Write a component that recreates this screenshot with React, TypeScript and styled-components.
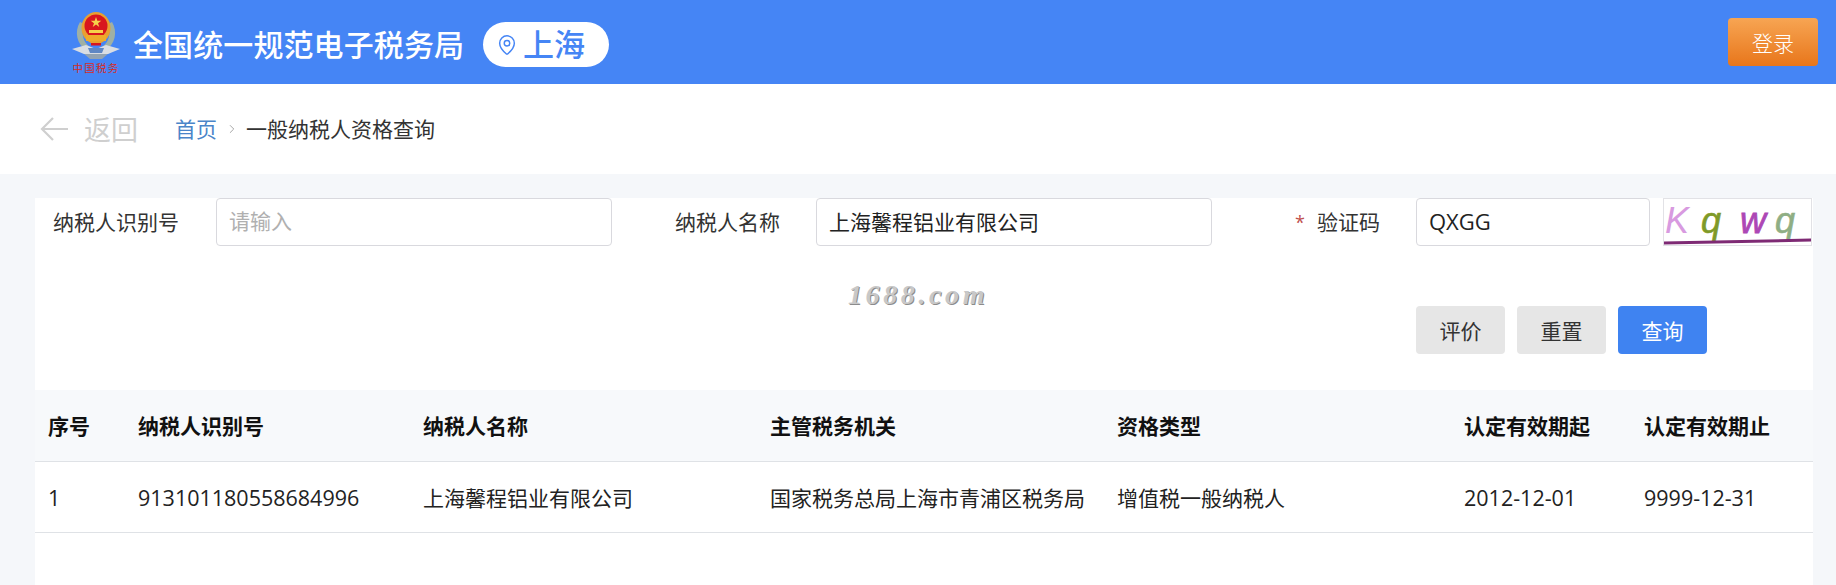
import React from "react";
import styled, { createGlobalStyle } from "styled-components";
import { MapPin, ChevronRight } from "lucide-react";

const CJK = `"Open Sans", "Noto Sans CJK SC", "Noto Sans", sans-serif`;

const Global = createGlobalStyle`
  html, body { margin: 0; padding: 0; background: #f5f7fa; }
  body { font-family: ${CJK}; width: 1836px; height: 585px; overflow: hidden; }
  * { box-sizing: border-box; }
`;

const Page = styled.div`
  width: 1836px;
  height: 585px;
  display: flex;
  flex-direction: column;
`;

const Header = styled.header`
  height: 84px;
  background: #4585f5;
  display: flex;
  align-items: center;
  padding: 0 18px 0 72px;
`;

const Brand = styled.div`
  display: flex;
  align-items: center;
  padding-top: 5px;
`;

const LogoWrap = styled.div`
  width: 48px;
  height: 66px;
  margin-right: 13px;
  flex: none;
`;

const Title = styled.h1`
  margin: 0;
  font-size: 30px;
  font-weight: 500;
  letter-spacing: 0.1px;
  line-height: 1;
  color: #fff;
  white-space: nowrap;
`;

const CityPill = styled.div`
  margin-left: 19px;
  width: 126px;
  height: 45px;
  border-radius: 23px;
  background: #fff;
  display: flex;
  align-items: center;
  padding-left: 13px;
  gap: 5px;
  color: #4585f5;
  font-size: 31px;
  font-weight: 500;
  line-height: 1;
  white-space: nowrap;
`;

const LoginButton = styled.button`
  margin-left: auto;
  width: 90px;
  height: 48px;
  border: 0;
  border-radius: 4px;
  background: linear-gradient(180deg, #f7a553 0%, #e8761b 100%);
  color: #fff;
  font-family: ${CJK};
  font-size: 21px;
  font-weight: 300;
  padding: 0;
`;

const Crumbs = styled.nav`
  height: 90px;
  background: #fff;
  display: flex;
  align-items: center;
  padding-left: 40px;
`;

const Back = styled.div`
  display: flex;
  align-items: center;
  gap: 16px;
  color: #cfcfcf;
  font-size: 27px;
  line-height: 1;
  width: 135px;
`;

const CrumbLink = styled.span`
  color: #4a85c9;
  font-size: 21px;
  line-height: 1;
`;

const CrumbSep = styled.span`
  display: flex;
  width: 29px;
  justify-content: center;
  color: #9a9a9a;
`;

const CrumbCurrent = styled.span`
  color: #333;
  font-size: 21px;
  line-height: 1;
`;

const Main = styled.main`
  flex: 1;
  padding: 24px 23px 0 35px;
  display: flex;
`;

const Panel = styled.section`
  position: relative;
  flex: 1;
  background: #fff;
`;

const FormRow = styled.div`
  display: flex;
  align-items: center;
  padding-left: 18px;
`;

const FieldLabel = styled.label<{ $w: number; $gap?: number }>`
  width: ${(p) => p.$w}px;
  margin-left: ${(p) => p.$gap ?? 0}px;
  flex: none;
  font-size: 21px;
  line-height: 1;
  color: #333;
  white-space: nowrap;
  display: flex;
  align-items: center;
`;

const Star = styled.span`
  color: #c0504d;
  font-size: 18px;
  width: 22px;
`;

const TextInput = styled.input<{ $w: number; $latin?: boolean }>`
  width: ${(p) => p.$w}px;
  height: 48px;
  flex: none;
  border: 1px solid #d9d9de;
  border-radius: 4px;
  padding: 0 12px 2px;
  font-family: ${CJK};
  font-size: ${(p) => (p.$latin ? 22 : 21)}px;
  color: #222;
  background: #fff;
  outline: none;
  &::placeholder { color: #b0b0b0; opacity: 1; }
`;

const Captcha = styled.div`
  margin-left: 13px;
  width: 149px;
  height: 48px;
  flex: none;
  border: 1px solid #e2e2e6;
  background: #fff;
  overflow: hidden;
`;

const Actions = styled.div`
  display: flex;
  justify-content: flex-end;
  gap: 12px;
  margin-top: 60px;
  padding-right: 106px;
`;

const ActionButton = styled.button<{ $primary?: boolean }>`
  width: 89px;
  height: 48px;
  border: 0;
  border-radius: 4px;
  padding: 0;
  background: ${(p) => (p.$primary ? "#3f83f1" : "#e6e6e6")};
  color: ${(p) => (p.$primary ? "#fff" : "#333")};
  font-family: ${CJK};
  font-size: 21px;
`;

const Watermark = styled.div`
  position: absolute;
  left: 813px;
  top: 81px;
  font-family: "Liberation Serif", serif;
  font-style: italic;
  font-weight: 700;
  font-size: 28px;
  line-height: 32px;
  letter-spacing: 3.6px;
  color: #c8c8c8;
  text-shadow: 1px 1px 0 #8c8c8c;
`;

const cols = "90px 285px 347px 347px 347px 180px 1fr";

const TableHead = styled.div`
  margin-top: 36px;
  display: grid;
  grid-template-columns: ${cols};
  height: 72px;
  align-items: center;
  background: #f7f9fb;
  border-bottom: 1px solid #dfe2e6;
`;

const TableRow = styled.div`
  display: grid;
  grid-template-columns: ${cols};
  height: 71px;
  align-items: center;
  border-bottom: 1px solid #dfe2e6;
`;

const HeadCell = styled.div`
  padding: 2px 0 0 13px;
  font-size: 21px;
  font-weight: 700;
  line-height: 1;
  color: #111;
  white-space: nowrap;
`;

const Cell = styled.div<{ $num?: boolean }>`
  padding: 2px 0 0 13px;
  font-size: ${(p) => (p.$num ? 21.5 : 21)}px;
  line-height: 1;
  color: #222;
  white-space: nowrap;
`;

const Logo = () => (
  <svg width="48" height="66" viewBox="0 0 48 66">
    <path d="M8 10 C2 20 5 32 14 38 L18 35 C11 30 9 22 12 12 Z" fill="#9fb0a4" />
    <path d="M40 10 C46 20 43 32 34 38 L30 35 C37 30 39 22 36 12 Z" fill="#9fb0a4" />
    <path d="M11 41 L37 41 L30 47 L18 47 Z" fill="#93a3b2" />
    <path d="M0 37 L14 33 L24 37 L34 33 L48 37 L36 42 L12 42 Z" fill="#d9dde3" />
    <path d="M16 36 L32 36 L30 41 L18 41 Z" fill="#5f87c4" />
    <ellipse cx="24" cy="16" rx="14.5" ry="16" fill="#e8a030" />
    <circle cx="24" cy="14" r="11.5" fill="#d8161e" />
    <path d="M24 5 L25.3 8.8 L29.3 8.8 L26 11.2 L27.3 15 L24 12.6 L20.7 15 L22 11.2 L18.7 8.8 L22.7 8.8 Z" fill="#f6d24a" />
    <rect x="17" y="18" width="14" height="3" fill="#f6d24a" />
    <rect x="14" y="23" width="20" height="6" fill="#efaa2a" />
    <rect x="19" y="31" width="10" height="2.5" fill="#d8161e" />
    <text x="24" y="60" textAnchor="middle" fontSize="10.5" letterSpacing="1.2" fill="#d92b1d" fontFamily='"Noto Sans CJK SC", sans-serif'>中国税务</text>
  </svg>
);

const CaptchaArt = () => (
  <svg width="147" height="46" viewBox="0 0 147 46">
    <g fontFamily='"Liberation Sans", sans-serif' fontStyle="italic" fontSize="36">
      <text x="1" y="34" fill="#d89ae0">K</text>
      <text x="37" y="34" fill="#7f9a28" stroke="#7f9a28" strokeWidth="0.6">q</text>
      <text x="76" y="34" fill="#ad47b5" stroke="#ad47b5" strokeWidth="0.8">w</text>
      <text x="111" y="34" fill="#8fae84" stroke="#8fae84" strokeWidth="0.6">q</text>
    </g>
    <path d="M0 44 L147 41" stroke="#7e2a74" strokeWidth="3" fill="none" />
  </svg>
);

const BackArrow = () => (
  <svg width="28" height="24" viewBox="0 0 28 24" fill="none" stroke="currentColor" strokeWidth="2.2">
    <path d="M28 12 H2 M13 1 L2 12 L13 23" />
  </svg>
);

const heads = ["序号", "纳税人识别号", "纳税人名称", "主管税务机关", "资格类型", "认定有效期起", "认定有效期止"];
const row: { t: string; num?: boolean }[] = [
  { t: "1", num: true },
  { t: "913101180558684996", num: true },
  { t: "上海馨程铝业有限公司" },
  { t: "国家税务总局上海市青浦区税务局" },
  { t: "增值税一般纳税人" },
  { t: "2012-12-01", num: true },
  { t: "9999-12-31", num: true },
];

export default function App() {
  return (
    <Page>
      <Global />
      <Header>
        <Brand>
          <LogoWrap><Logo /></LogoWrap>
          <Title>全国统一规范电子税务局</Title>
          <CityPill>
            <MapPin size={22} strokeWidth={1.6} />
            上海
          </CityPill>
        </Brand>
        <LoginButton>登录</LoginButton>
      </Header>
      <Crumbs>
        <Back>
          <BackArrow />
          返回
        </Back>
        <CrumbLink>首页</CrumbLink>
        <CrumbSep><ChevronRight size={14} strokeWidth={1.5} /></CrumbSep>
        <CrumbCurrent>一般纳税人资格查询</CrumbCurrent>
      </Crumbs>
      <Main>
        <Panel>
          <FormRow>
            <FieldLabel $w={163}>纳税人识别号</FieldLabel>
            <TextInput $w={396} placeholder="请输入" readOnly />
            <FieldLabel $w={141} $gap={63}>纳税人名称</FieldLabel>
            <TextInput $w={396} value="上海馨程铝业有限公司" readOnly />
            <FieldLabel $w={121} $gap={83}><Star>*</Star>验证码</FieldLabel>
            <TextInput $w={234} $latin value="QXGG" readOnly />
            <Captcha><CaptchaArt /></Captcha>
          </FormRow>
          <Watermark>1688.com</Watermark>
          <Actions>
            <ActionButton>评价</ActionButton>
            <ActionButton>重置</ActionButton>
            <ActionButton $primary>查询</ActionButton>
          </Actions>
          <TableHead>
            {heads.map((h) => <HeadCell key={h}>{h}</HeadCell>)}
          </TableHead>
          <TableRow>
            {row.map((c) => <Cell key={c.t} $num={c.num}>{c.t}</Cell>)}
          </TableRow>
        </Panel>
      </Main>
    </Page>
  );
}
